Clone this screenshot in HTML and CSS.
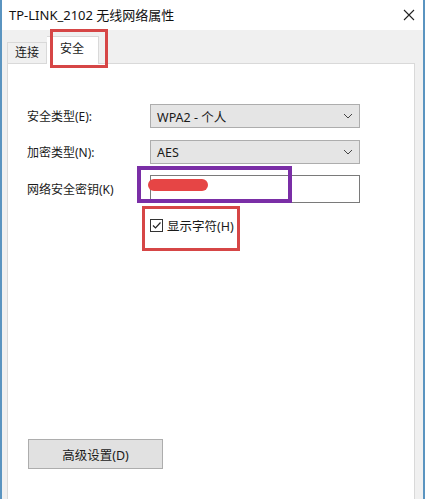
FILE: index.html
```html
<!DOCTYPE html>
<html lang="zh-CN">
  <head>
    <meta charset="UTF-8" />
    <meta name="viewport" content="width=device-width, initial-scale=1.0" />
    <title>TP-LINK_2102 无线网络属性</title>
    <link rel="stylesheet" href="styles.css">
  </head>
  <body>
    <div class="window">
      <div class="titlebar">
        <span class="title">TP-LINK_2102 无线网络属性</span>
        <svg class="close" width="12" height="12" viewBox="0 0 12 12">
          <path d="M1 1 L11 11 M11 1 L1 11" stroke="#222" stroke-width="1.1" fill="none" />
        </svg>
      </div>

      <div class="tabs">
        <div class="tab">连接</div>
        <div class="tab active">安全</div>
        <div class="mark mark-tab"></div>
      </div>

      <div class="panel">
        <div class="row">
          <label class="label">安全类型(E):</label>
          <div class="select">
            <span>WPA2 - 个人</span>
            <svg width="10" height="6" viewBox="0 0 10 6">
              <path d="M1 1 L5 5 L9 1" stroke="#444" stroke-width="1" fill="none" />
            </svg>
          </div>
        </div>

        <div class="row">
          <label class="label">加密类型(N):</label>
          <div class="select">
            <span>AES</span>
            <svg width="10" height="6" viewBox="0 0 10 6">
              <path d="M1 1 L5 5 L9 1" stroke="#444" stroke-width="1" fill="none" />
            </svg>
          </div>
        </div>

        <div class="row row-key">
          <label class="label">网络安全密钥(K)</label>
          <div class="keybox">
            <div class="blur"></div>
          </div>
          <div class="mark mark-key"></div>
        </div>

        <div class="row row-check">
          <label class="check">
            <span class="box">
              <svg width="11" height="11" viewBox="0 0 11 11">
                <path d="M2 5.5 L4.5 8 L9.5 2.5" stroke="#222" stroke-width="1.2" fill="none" />
              </svg>
            </span>
            显示字符(H)
          </label>
          <div class="mark mark-check"></div>
        </div>

        <div class="spacer"></div>

        <button type="button" class="adv-btn">高级设置(D)</button>
      </div>
    </div>
  </body>
</html>
```

FILE: styles.css
```css
body {
  margin: 0;
  font-family: "Noto Sans", "Noto Sans CJK SC", sans-serif;
  font-size: 12px;
  color: #1a1a1a;
  background: #fff;
}
.window {
  width: 425px;
  height: 499px;
  box-sizing: border-box;
  border-left: 2px solid #5a94c0;
  border-right: 2px solid #5a94c0;
  background: #f0f0f0;
  display: flex;
  flex-direction: column;
  overflow: hidden;
}
.titlebar {
  height: 30px;
  background: #fff;
  display: flex;
  align-items: center;
  justify-content: space-between;
  padding: 0 8px 0 7px;
  flex-shrink: 0;
}
.title {
  font-size: 13px;
  color: #111;
  margin-top: -2px;
}
.close {
  margin-top: -1px;
}
.tabs {
  position: relative;
  height: 33px;
  display: flex;
  align-items: flex-end;
  padding-left: 5px;
  flex-shrink: 0;
}
.tab {
  height: 20px;
  padding: 0 7px;
  line-height: 20px;
  border: 1px solid #d9d9d9;
  border-bottom: none;
  background: #f0f0f0;
}
.tab.active {
  height: 27px;
  line-height: 24px;
  padding: 0 14px 0 13px;
  background: #fff;
  border-left: none;
  position: relative;
  top: 1px;
  z-index: 1;
}
.panel {
  flex: 1;
  margin: 0 8px 0 5px;
  background: #fff;
  border: 1px solid #d9d9d9;
  border-bottom: none;
  padding: 40px 0 30px 19px;
  display: flex;
  flex-direction: column;
}
.row {
  position: relative;
  display: flex;
  align-items: center;
  height: 24px;
  margin-bottom: 12px;
}
.row + .row {
  margin-bottom: 11px;
}
.label {
  width: 123px;
  flex-shrink: 0;
}
.select {
  width: 210px;
  height: 24px;
  box-sizing: border-box;
  background: #e5e5e5;
  border: 1px solid #adadad;
  display: flex;
  align-items: center;
  justify-content: space-between;
  padding: 0 6px;
}
.select span {
  font-size: 12.5px;
}
.row-key {
  height: 28px;
}
.keybox {
  position: relative;
  width: 210px;
  height: 28px;
  box-sizing: border-box;
  border: 1px solid #7a7a7a;
  background: #fff;
}
.blur {
  position: absolute;
  left: -3px;
  top: 3px;
  width: 60px;
  height: 12px;
  border-radius: 6px;
  background: #e64545;
  filter: blur(0.6px);
}
.row-check {
  margin-top: 4px;
  height: 14px;
}
.check {
  display: flex;
  align-items: center;
  margin-left: 123px;
  gap: 4px;
  font-size: 12.5px;
}
.box {
  width: 11px;
  height: 11px;
  border: 1px solid #333;
  display: flex;
  background: #fff;
}
.spacer {
  flex: 1;
}
.adv-btn {
  width: 135px;
  height: 30px;
  margin-left: 1px;
  background: #e1e1e1;
  border: 1px solid #adadad;
  font-family: "Noto Sans", "Noto Sans CJK SC", sans-serif;
  font-size: 12.5px;
  color: #1a1a1a;
  cursor: pointer;
}

/* annotation boxes drawn over the dialog */
.mark {
  position: absolute;
  box-sizing: border-box;
  pointer-events: none;
}
.mark-tab {
  left: 48px;
  top: -1px;
  width: 58px;
  height: 39px;
  border: 3px solid #d64646;
  z-index: 2;
}
.mark-key {
  left: 110px;
  top: -9px;
  width: 155px;
  height: 37px;
  border: 4px solid #7a2ea6;
}
.mark-check {
  left: 115px;
  top: -12px;
  width: 98px;
  height: 45px;
  border: 3px solid #d64646;
}
```
